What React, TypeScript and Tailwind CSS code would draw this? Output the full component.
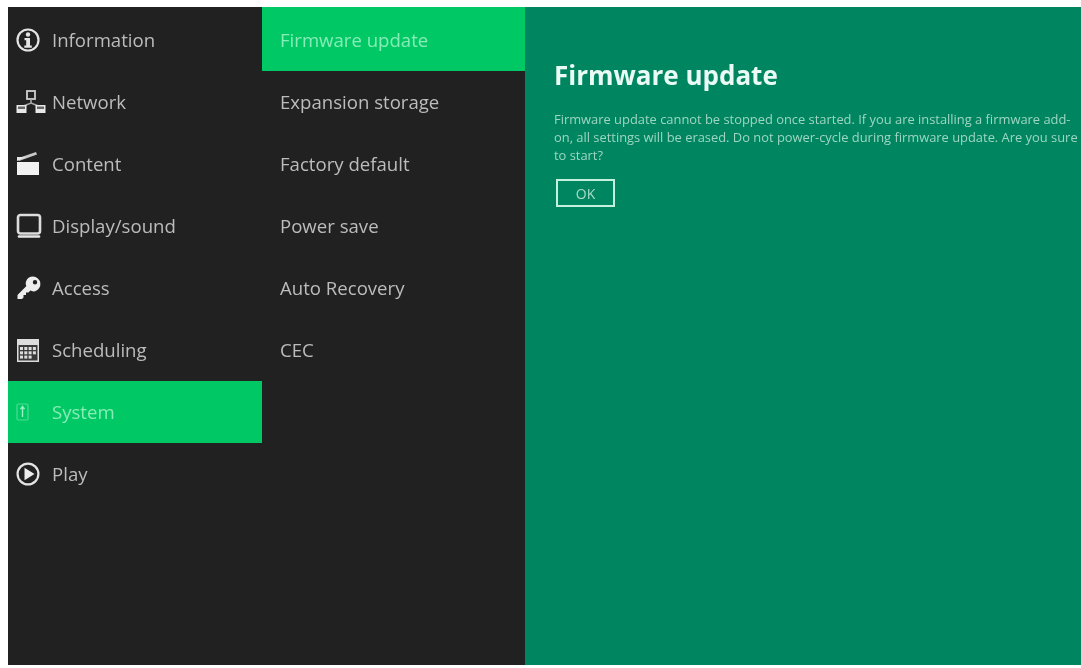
import React from "react";

const Info = () => (
  <svg width="24" height="24" viewBox="0 0 24 24">
    <circle cx="12" cy="12" r="10.500" fill="none" stroke="#e4e4e4" strokeWidth="2.200" />
    <circle cx="12" cy="6.500" r="2.200" fill="#e4e4e4" />
    <path d="M8.500 10h5.500v7.500h1.800v2.300H8.300v-2.300h1.900v-5.200H8.500z" fill="#e4e4e4" />
  </svg>
);
const Net = () => (
  <svg width="30" height="24" viewBox="0 0 30 24">
    <rect x="11" y="1" width="8" height="8" fill="none" stroke="#cfcfcf" strokeWidth="1.800" />
    <path d="M15 9v4M5 17l10-4 10 4" fill="none" stroke="#a8a8a8" strokeWidth="1.600" />
    <rect x="0.500" y="15" width="10" height="8" fill="#e8e8e8" />
    <rect x="2" y="16.500" width="7" height="2.500" fill="#666" />
    <rect x="19.500" y="15" width="10" height="8" fill="#e8e8e8" />
    <rect x="21" y="16.500" width="7" height="2.500" fill="#666" />
  </svg>
);
const Clap = () => (
  <svg width="24" height="26" viewBox="0 0 24 26">
    <path d="M1 11h22v13H1z" fill="#f2f2f2" />
    <path d="M1 7.500L20 1l1 2.500L3 10z" fill="#c8c8c8" />
    <path d="M1 6h9L1 10z" fill="#e6e6e6" />
  </svg>
);
const Monitor = () => (
  <svg width="26" height="26" viewBox="0 0 26 26">
    <rect x="2" y="2" width="22" height="18.500" rx="2.500" fill="none" stroke="#dcdcdc" strokeWidth="2.600" />
    <path d="M3 23.500h20" stroke="#e8e8e8" strokeWidth="2.600" strokeLinecap="round" />
  </svg>
);
const Key = () => (
  <svg width="26" height="26" viewBox="0 0 26 26">
    <path
      fillRule="evenodd"
      d="M17 1.500a7.500 7.500 0 0 1 2 14.700c-1.700.4-3.300.1-4.700-.6L12.500 17.500h-2.500v2.500H7.500v2.500l-1.500 1.500H1.500v-4L10.400 11c-.7-1.400-.9-3-.4-4.600A7.500 7.500 0 0 1 17 1.500zm2 3.500a2.200 2.200 0 1 0 0 4.400 2.200 2.200 0 0 0 0-4.400z"
      fill="#ededed"
    />
  </svg>
);
const Calendar = () => (
  <svg width="24" height="24" viewBox="0 0 24 24">
    <rect x="1" y="1" width="22" height="23" fill="#dcdcdc" />
    <rect x="2.500" y="7" width="19" height="15.500" fill="#3a3a3a" />
    {[0, 1, 2].map((r) =>
      [0, 1, 2, 3].map((c) => (
        <rect key={`${r}-${c}`} x={4 + c * 4.300} y={9 + r * 4.300} width="3" height="3" fill={r === 2 && c === 3 ? "#3a3a3a" : "#dcdcdc"} />
      ))
    )}
  </svg>
);
const Sys = () => (
  <svg width="13" height="18" viewBox="0 0 13 18">
    <rect x="1" y="1" width="11" height="16" rx="1.500" fill="none" stroke="#4fdc98" strokeWidth="1.200" />
    <path d="M6.500 14V4M4.500 6.200L6.500 3.500l2 2.700" fill="none" stroke="#9aefc6" strokeWidth="1.400" />
  </svg>
);
const Play = () => (
  <svg width="24" height="24" viewBox="0 0 24 24">
    <circle cx="12" cy="12" r="10.400" fill="none" stroke="#e4e4e4" strokeWidth="2.200" />
    <path d="M8.500 5.800L18.500 12l-10 6.200z" fill="#ececec" />
  </svg>
);

const main = [
  { label: "Information", icon: <Info /> },
  { label: "Network", icon: <Net /> },
  { label: "Content", icon: <Clap /> },
  { label: "Display/sound", icon: <Monitor /> },
  { label: "Access", icon: <Key /> },
  { label: "Scheduling", icon: <Calendar /> },
  { label: "System", icon: <Sys />, active: true },
  { label: "Play", icon: <Play /> },
];
const sub = ["Expansion storage", "Factory default", "Power save", "Auto Recovery", "CEC"];

export default function App() {
  return (
    <div className="w-[1081px] h-[668px] bg-white pl-[8px] pt-[7px] pb-[3px] font-['Open_Sans','Liberation_Sans',sans-serif] overflow-hidden">
      <div className="flex h-full blur-[0.6px]">
        <nav className="w-[254px] bg-[#212121] pt-[2px] shrink-0">
          {main.map((m) => (
            <div
              key={m.label}
              className={`h-[62px] flex items-center text-[18.600px] ${m.active ? "bg-[#00c864] text-[#86ecb8]" : "text-[#bcbcbc]"}`}
            >
              <div className="w-[44px] pl-[8px] flex items-center shrink-0">{m.icon}</div>
              <span>{m.label}</span>
            </div>
          ))}
        </nav>
        <div className="w-[263px] bg-[#212121] shrink-0 text-[18.600px] text-[#bcbcbc]">
          <div className="h-[64px] pt-[2px] bg-[#00c864] text-[#86ecb8] pl-[18px] flex items-center">Firmware update</div>
          {sub.map((s) => (
            <div key={s} className="h-[62px] pl-[18px] flex items-center">
              {s}
            </div>
          ))}
        </div>
        <main className="flex-1 bg-[#008561] pl-[29px] pt-[52px] overflow-hidden">
          <h1 className="text-[26px] leading-[33px] font-bold text-[#eafaf4]">Firmware update</h1>
          <p className="mt-[18px] text-[12.900px] leading-[18px] text-[#9ed6c2] whitespace-nowrap">
            Firmware update cannot be stopped once started. If you are installing a firmware add-
            <br />
            on, all settings will be erased. Do not power-cycle during firmware update. Are you sure
            <br />
            to start?
          </p>
          <button className="mt-[15px] ml-[2px] block w-[59px] h-[28px] border-2 border-[#c4f0de] text-[14px] text-[#a9dcc9]">OK</button>
        </main>
      </div>
    </div>
  );
}
